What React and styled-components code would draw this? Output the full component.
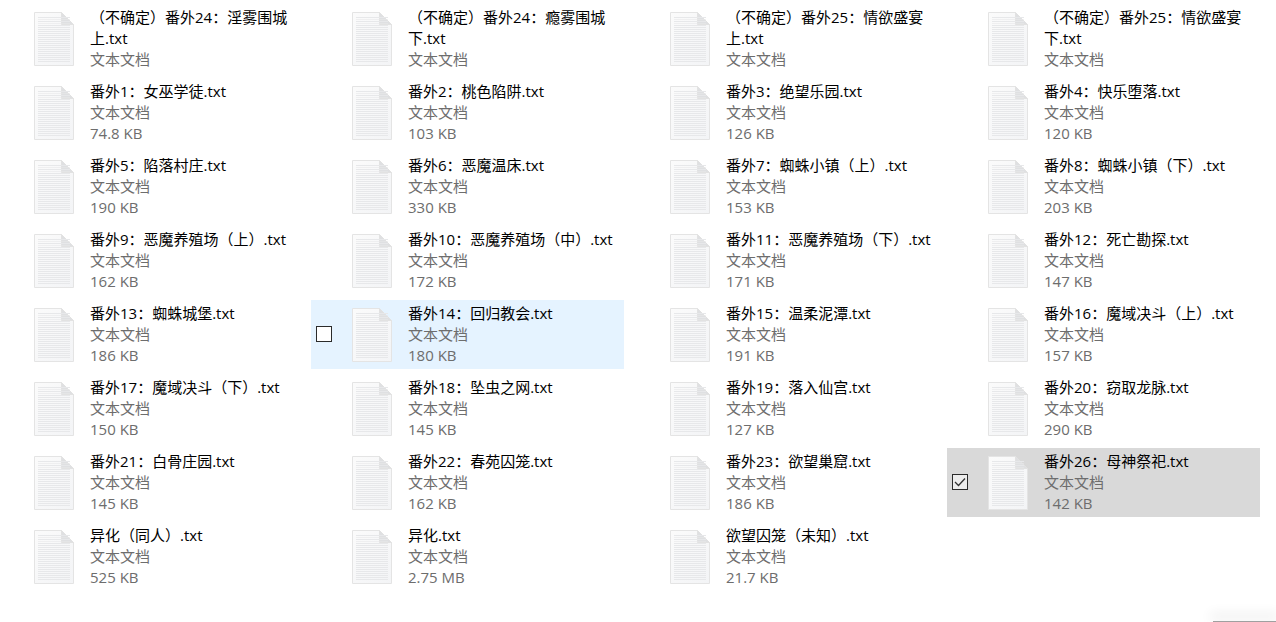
import React from "react";
import styled, { createGlobalStyle } from "styled-components";

const Global = createGlobalStyle`
  html, body { margin: 0; padding: 0; background: #fff; overflow: hidden; }
  body { width: 1276px; height: 622px; font-family: "Open Sans", "Noto Sans CJK SC", "Liberation Sans", sans-serif; }
`;

const Page = styled.div`
  position: relative;
  width: 1276px;
  height: 622px;
  overflow: hidden;
`;

const Grid = styled.div`
  display: grid;
  grid-template-columns: repeat(4, 313px);
  grid-auto-rows: 69px;
  column-gap: 5px;
  row-gap: 5px;
  margin-left: -7px;
  padding-top: 4px;
`;

const Tile = styled.div`
  display: flex;
  align-items: flex-start;
  height: 69px;
  box-sizing: border-box;
  background: ${(p) => (p.$state === "selected" ? "#d9d9d9" : p.$state === "hover" ? "#e5f3ff" : "transparent")};
`;

const CheckSlot = styled.div`
  flex: 0 0 41px;
  height: 68px;
  display: flex;
  align-items: center;
  padding-left: 5px;
  box-sizing: border-box;
`;

const CheckBox = styled.div`
  width: 16px;
  height: 16px;
  box-sizing: border-box;
  border: 1px solid #2b2b2b;
  background: ${(p) => (p.$checked ? "#ededed" : "#fff")};
  display: flex;
  align-items: center;
  justify-content: center;
`;

const IconSlot = styled.div`
  flex: 0 0 56px;
  padding-top: 8px;
  line-height: 0;
`;

const Info = styled.div`
  flex: 1;
  min-width: 0;
  padding-top: 3px;
  padding-right: 8px;
`;

const Name = styled.div`
  font-size: 15px;
  line-height: 21px;
  color: #000;
  word-break: break-all;
`;

const Meta = styled.div`
  font-size: 15px;
  line-height: 21px;
  color: #6d6d6d;
`;

const CornerLine = styled.div`
  position: absolute;
  right: 0;
  bottom: 0;
  width: 63px;
  height: 1px;
  background: #a0a0a0;
  box-shadow: 0 -5px 12px 3px rgba(0, 0, 0, 0.07);
`;

const FileIcon = () => (
  <svg width="40" height="54" viewBox="0 0 40 54">
    <defs>
      <linearGradient id="pg" x1="0" y1="0" x2="1" y2="1">
        <stop offset="0" stopColor="#fbfbfb" />
        <stop offset="1" stopColor="#f3f4f6" />
      </linearGradient>
    </defs>
    <path d="M0.5 0.5H27.5L39.5 12.5V53.5H0.5Z" fill="url(#pg)" stroke="#e4e4e4" />
    <path d="M27.5 0.5V12.5H39.5Z" fill="#dfe0e2" stroke="#e2e2e2" />
    {Array.from({ length: 23 }, (_, i) => (
      <rect key={i} x="4" y={5 + i * 2} width="32" height="1" fill="#e7e8ea" opacity={i < 4 ? (i % 2 ? 0.6 : 1) : 1} />
    ))}
  </svg>
);

const CheckMark = () => (
  <svg width="12" height="10" viewBox="0 0 12 10" fill="none">
    <path d="M1 5L4.5 8.5L11 1.5" stroke="#333" strokeWidth="1.3" />
  </svg>
);

const T = "文本文档";
const files = [
  ["（不确定）番外24：淫雾围城上.txt", null],
  ["（不确定）番外24：瘾雾围城下.txt", null],
  ["（不确定）番外25：情欲盛宴上.txt", null],
  ["（不确定）番外25：情欲盛宴下.txt", null],
  ["番外1：女巫学徒.txt", "74.8 KB"],
  ["番外2：桃色陷阱.txt", "103 KB"],
  ["番外3：绝望乐园.txt", "126 KB"],
  ["番外4：快乐堕落.txt", "120 KB"],
  ["番外5：陷落村庄.txt", "190 KB"],
  ["番外6：恶魔温床.txt", "330 KB"],
  ["番外7：蜘蛛小镇（上）.txt", "153 KB"],
  ["番外8：蜘蛛小镇（下）.txt", "203 KB"],
  ["番外9：恶魔养殖场（上）.txt", "162 KB"],
  ["番外10：恶魔养殖场（中）.txt", "172 KB"],
  ["番外11：恶魔养殖场（下）.txt", "171 KB"],
  ["番外12：死亡勘探.txt", "147 KB"],
  ["番外13：蜘蛛城堡.txt", "186 KB"],
  ["番外14：回归教会.txt", "180 KB", "hover"],
  ["番外15：温柔泥潭.txt", "191 KB"],
  ["番外16：魔域决斗（上）.txt", "157 KB"],
  ["番外17：魔域决斗（下）.txt", "150 KB"],
  ["番外18：坠虫之网.txt", "145 KB"],
  ["番外19：落入仙宫.txt", "127 KB"],
  ["番外20：窃取龙脉.txt", "290 KB"],
  ["番外21：白骨庄园.txt", "145 KB"],
  ["番外22：春苑囚笼.txt", "162 KB"],
  ["番外23：欲望巢窟.txt", "186 KB"],
  ["番外26：母神祭祀.txt", "142 KB", "selected"],
  ["异化（同人）.txt", "525 KB"],
  ["异化.txt", "2.75 MB"],
  ["欲望囚笼（未知）.txt", "21.7 KB"],
];

export default function App() {
  return (
    <Page>
      <Global />
      <Grid>
        {files.map(([name, size, state]) => (
          <Tile key={name} $state={state}>
            <CheckSlot>
              {state && (
                <CheckBox $checked={state === "selected"}>
                  {state === "selected" && <CheckMark />}
                </CheckBox>
              )}
            </CheckSlot>
            <IconSlot>
              <FileIcon />
            </IconSlot>
            <Info>
              <Name>{name}</Name>
              <Meta>{T}</Meta>
              {size && <Meta>{size}</Meta>}
            </Info>
          </Tile>
        ))}
      </Grid>
      <CornerLine />
    </Page>
  );
}
